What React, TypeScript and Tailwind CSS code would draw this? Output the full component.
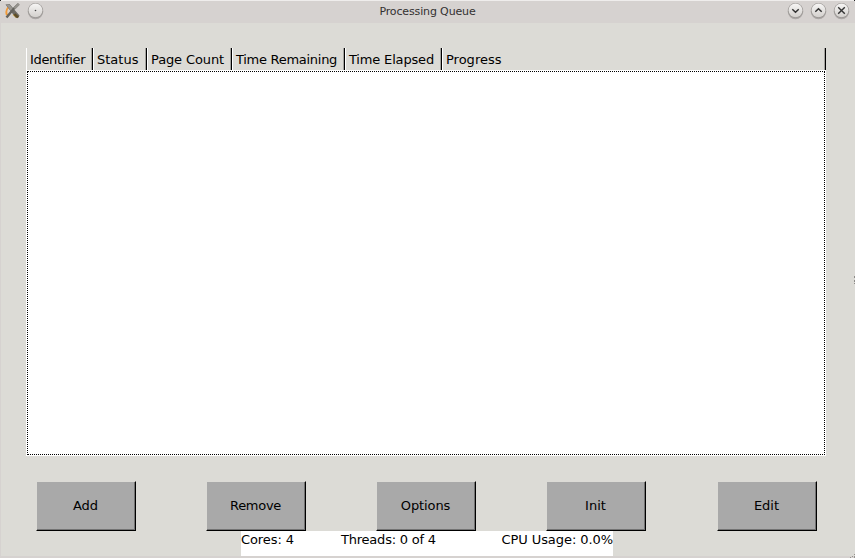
import type { ReactNode } from "react";

const columns = [
  { label: "Identifier", style: "w-[67px] tracking-[-0.34px]" },
  { label: "Status", style: "w-[54px]" },
  { label: "Page Count", style: "w-[85px] tracking-[-0.12px]" },
  { label: "Time Remaining", style: "w-[113px] tracking-[-0.28px]" },
  { label: "Time Elapsed", style: "w-[97px] tracking-[-0.17px]" },
  { label: "Progress", style: "w-[384px]" },
];

function HeaderCell({ label, style }: { label: string; style: string }) {
  return (
    <div
      className={`${style} flex h-[22px] shrink-0 border-r border-l border-r-black border-l-white`}
    >
      <span className="flex-1 border-r border-[#a4a39f] pl-[3px] leading-[23px] whitespace-nowrap">
        {label}
      </span>
    </div>
  );
}

function ActionButton({ label, className = "" }: { label: string; className?: string }) {
  return (
    <button
      className={`${className} h-[50px] w-[100px] shrink-0 border border-t-[#dcdbd6] border-r-black border-b-black border-l-[#dcdbd6]`}
    >
      <span className="flex h-full items-center justify-center border-r border-b border-[#737373] bg-[#a9a9a9]">
        {label}
      </span>
    </button>
  );
}

function RoundButton({ children }: { children: ReactNode }) {
  return (
    <svg width="17" height="18" viewBox="0 0 17 18" className="shrink-0">
      <defs>
        <linearGradient id="knob" x1="0" y1="0" x2="0" y2="1">
          <stop offset="0" stopColor="#f7f6f5" />
          <stop offset="1" stopColor="#d3d0cd" />
        </linearGradient>
      </defs>
      <circle cx="8.5" cy="9.4" r="7.8" fill="#aaa6a4" />
      <circle cx="8.5" cy="8.5" r="7.5" fill="#999693" />
      <circle cx="8.5" cy="8.3" r="6.9" fill="url(#knob)" />
      {children}
    </svg>
  );
}

function AppIcon() {
  return (
    <svg width="16" height="16" viewBox="0 0 16 16" className="mt-px shrink-0">
      <path d="M5 3.5C2 4.5 1 8 1.5 11L4 13" fill="none" stroke="#f29a37" strokeWidth="1.9" />
      <path d="M8 11.5 11 14l3-1.5" fill="none" stroke="#e9b74c" strokeWidth="1.5" />
      <path d="M0.5 1.5 4.5 1 14.5 12.5 13 15 10.5 14.5Z" fill="#6d6a64" />
      <path d="M1 1.5 4.5 1.5 8.5 6.5 6.5 8.5Z" fill="#9a9792" />
      <path d="M13.5 1 8.5 6 1.5 14.5" fill="none" stroke="#64625d" strokeWidth="2.4" />
      <path d="M14 0.8 9.5 5.5" stroke="#96938e" strokeWidth="2.4" />
      <path d="M9.5 11 13 14.5" stroke="#5f4d24" strokeWidth="2.4" />
    </svg>
  );
}

export default function App() {
  return (
    <div className="relative flex h-[558px] w-[855px] flex-col overflow-hidden bg-[#dcdbd6] font-['DejaVu_Sans',sans-serif] text-[13px] text-black">
      <header className="flex h-[23px] shrink-0 items-start border-t border-[#efedec] bg-[#d6d2d0] pr-[5px] pl-[5px]">
        <div className="flex w-[120px] gap-[6px] pt-px">
          <AppIcon />
          <RoundButton>
            <circle cx="8.5" cy="8.5" r="0.8" fill="#444" />
          </RoundButton>
        </div>
        <h1 className="flex-1 text-center text-[11px] leading-[21px] tracking-[-0.14px] text-[#333130]">
          Processing Queue
        </h1>
        <div className="flex w-[120px] justify-end gap-[6px] pt-px">
          <RoundButton>
            <path d="M5.3 7.2 8.5 10.2 11.7 7.2" fill="none" stroke="#333" strokeWidth="1.5" />
          </RoundButton>
          <RoundButton>
            <path d="M5.3 9.8 8.5 6.8 11.7 9.8" fill="none" stroke="#333" strokeWidth="1.5" />
          </RoundButton>
          <RoundButton>
            <path d="M5.2 5.2 11.8 11.8M11.8 5.2 5.2 11.8" stroke="#333" strokeWidth="1.4" />
          </RoundButton>
        </div>
      </header>

      <main className="flex h-[533px] shrink-0 flex-col border-l border-[#d6d2d0] pt-[25px] pl-[25px]">
        <div className="flex shrink-0">
          {columns.map((c) => (
            <HeaderCell key={c.label} label={c.label} style={c.style} />
          ))}
        </div>
        <div className="h-[386px] w-[800px] shrink-0 bg-white p-px">
          <div className="h-full border border-dotted border-black" />
        </div>
        <div className="mt-[25px] flex shrink-0 gap-[70px] pl-[10px]">
          <ActionButton label="Add" />
          <ActionButton label="Remove" className="tracking-[-0.3px]" />
          <ActionButton label="Options" className="tracking-[-0.1px]" />
          <ActionButton label="Init" />
          <ActionButton label="Edit" className="ml-px" />
        </div>
        <div className="ml-[215px] flex h-[25px] w-[372px] shrink-0 justify-between bg-white leading-[18px] whitespace-nowrap">
          <span className="w-[100px] tracking-[-0.08px]">Cores: 4</span>
          <span className="flex-1 tracking-[-0.22px]">Threads: 0 of 4</span>
          <span className="tracking-[-0.07px]">CPU Usage: 0.0%</span>
        </div>
      </main>
      <footer className="h-[2px] shrink-0 bg-[#d6d2d0]" />

      <svg className="absolute top-[275px] right-0" width="2" height="10" fill="#8d8b88">
        <path d="M1 1h1v2h-1zM1 5h1v2h-1zM1 8h1v1h-1z" />
      </svg>
      <svg className="absolute right-0 bottom-0" width="5" height="5" fill="#96938f">
        <path d="M4 1h1v1h-1zM2 3h1v1h-1zM4 3h1v2h-1zM0 4h1v1h-1z" />
      </svg>
      <svg className="absolute top-0 left-0" width="855" height="1">
        <path d="M0 0h1v1h-1zM854 0h1v1h-1z" fill="#222" />
      </svg>
    </div>
  );
}
